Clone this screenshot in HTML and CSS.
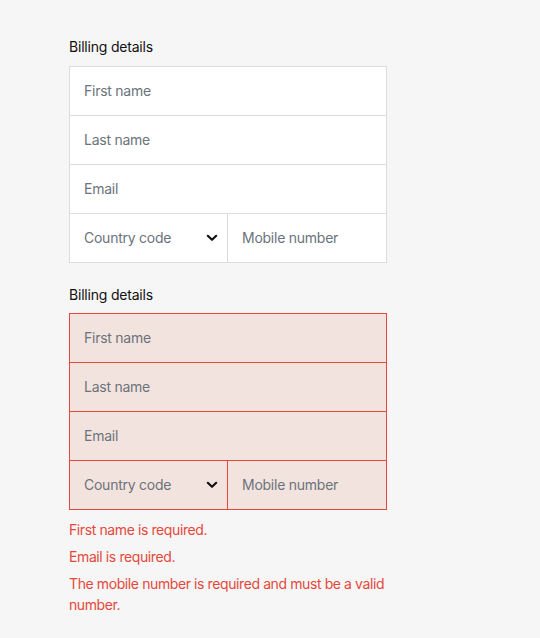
FILE: index.html
```html
<!DOCTYPE html>
<html lang="en">
<head>
  <meta charset="UTF-8">
  <title>Billing details</title>
  <meta name="viewport" content="width=device-width,initial-scale=1">
  <link rel="stylesheet" href="styles.css">
</head>
<body>
  <div class="page">
    <form class="billing">
      <div class="legend">Billing details</div>
      <div class="fields">
        <div class="field"><span class="ph">First name</span></div>
        <div class="field"><span class="ph">Last name</span></div>
        <div class="field"><span class="ph">Email</span></div>
        <div class="field split">
          <div class="cell select">
            <span class="ph">Country code</span>
            <svg class="chev" width="12" height="8" viewBox="0 0 12 8"><path d="M1.8 1.8 L6 5.8 L10.2 1.8" fill="none" stroke="#111" stroke-width="2.2" stroke-linecap="round" stroke-linejoin="round"/></svg>
          </div>
          <div class="cell"><span class="ph">Mobile number</span></div>
        </div>
      </div>
    </form>

    <form class="billing has-error">
      <div class="legend">Billing details</div>
      <div class="fields">
        <div class="field"><span class="ph">First name</span></div>
        <div class="field"><span class="ph">Last name</span></div>
        <div class="field"><span class="ph">Email</span></div>
        <div class="field split">
          <div class="cell select">
            <span class="ph">Country code</span>
            <svg class="chev" width="12" height="8" viewBox="0 0 12 8"><path d="M1.8 1.8 L6 5.8 L10.2 1.8" fill="none" stroke="#111" stroke-width="2.2" stroke-linecap="round" stroke-linejoin="round"/></svg>
          </div>
          <div class="cell"><span class="ph">Mobile number</span></div>
        </div>
      </div>
      <div class="errors">
        <p>First name is required.</p>
        <p>Email is required.</p>
        <p>The mobile number is required and must be a valid number.</p>
      </div>
    </form>
  </div>
</body>
</html>
```

FILE: styles.css
```css
:root {
  --bg:         #f6f6f6;
  --border:     #dcdcdc;
  --text:       #111;
  --ph:         #6b737b;
  --err:        #e5483b;
  --err-bg:     #f3e3df;
}
html, body {
  margin: 0; padding: 0;
  background: var(--bg);
  color: var(--text);
  font-family: Inter, "Liberation Sans", sans-serif;
  font-size: 14px;
}
.page {
  width: 318px;
  padding: 37px 0 0 69px;
}
.billing { margin-bottom: 22px; }
.legend {
  line-height: 20px;
  margin-bottom: 9px;
  letter-spacing: -0.2px;
}
.billing + .billing .legend { margin-bottom: 8px; }
.fields {
  background: #fff;
  border: 1px solid var(--border);
}
.field {
  height: 48px;
  display: flex;
  align-items: center;
  padding: 0 14px;
}
.field + .field { border-top: 1px solid var(--border); }
.field.split {
  padding: 0;
  display: grid;
  grid-template-columns: 157px 1fr;
}
.cell {
  height: 48px;
  display: flex;
  align-items: center;
  padding: 0 14px;
}
.cell + .cell { border-left: 1px solid var(--border); }
.cell.select { justify-content: space-between; padding-right: 9px; }
.ph { color: var(--ph); letter-spacing: -0.25px; margin-top: -2px; }
.chev { display: block; margin-top: -1px; }

.has-error .fields { background: var(--err-bg); border-color: var(--err); }
.has-error .field + .field,
.has-error .cell + .cell { border-color: var(--err); }
.errors { margin-top: 9px; }
.errors p {
  margin: 0 0 6px;
  color: var(--err);
  line-height: 21px;
  letter-spacing: -0.4px;
}
```
